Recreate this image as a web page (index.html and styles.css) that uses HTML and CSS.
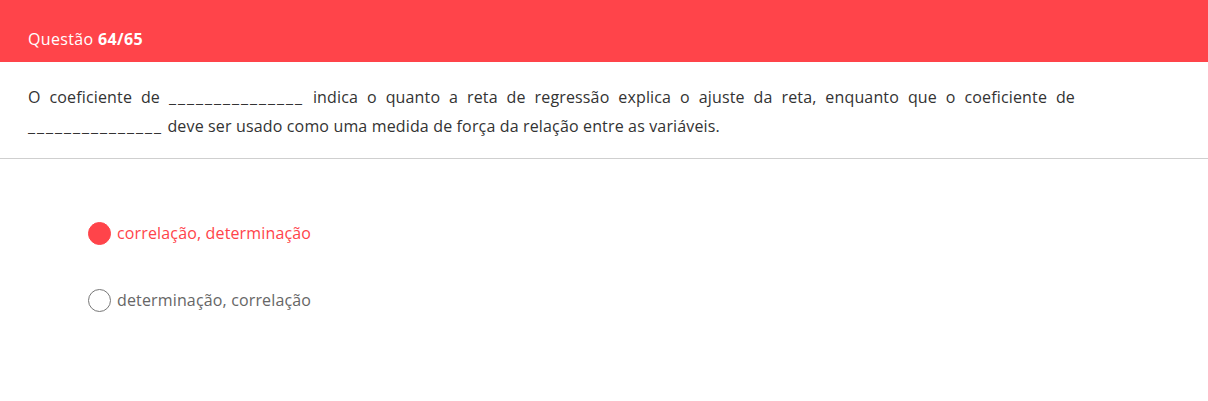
FILE: index.html
```html
<!DOCTYPE html>
<html lang="pt">
<head>
<meta charset="utf-8">
<link rel="stylesheet" href="styles.css">
</head>
<body>
<header class="bar">
  <span class="bar-title">Questão <b>64/65</b></span>
</header>
<section class="question">
  <p class="question-text">O coeficiente de <span class="blank">_______________</span> indica o quanto a reta de regressão explica o ajuste da reta, enquanto que o coeficiente de <span class="blank">_______________</span> deve ser usado como uma medida de força da relação entre as variáveis.</p>
</section>
<ul class="options">
  <li class="option selected"><span class="radio"></span><span class="label">correlação, determinação</span></li>
  <li class="option"><span class="radio"></span><span class="label">determinação, correlação</span></li>
</ul>
</body>
</html>
```
FILE: styles.css
```css
html, body {
  margin: 0;
  padding: 0;
  background: #fff;
  font-family: "Open Sans", "Noto Sans", sans-serif;
}
.bar {
  height: 62px;
  background: #ff444a;
  display: flex;
  align-items: center;
  padding: 15px 28px 0;
  box-sizing: border-box;
}
.bar-title {
  color: #fff;
  font-size: 16px;
  letter-spacing: 0.35px;
}
.bar-title b {
  font-weight: 700;
}
.question {
  padding: 21px 133px 17px 28px;
  border-bottom: 1px solid #cfcfcf;
}
.question-text {
  margin: 0;
  font-size: 16px;
  line-height: 29px;
  color: #333;
  text-align: justify;
  letter-spacing: 0.15px;
}
.blank {
  letter-spacing: 2px;
}
.options {
  list-style: none;
  margin: 0;
  padding: 62px 0 0 88px;
  display: flex;
  flex-direction: column;
  gap: 43px;
}
.option {
  display: flex;
  align-items: center;
  gap: 6px;
  height: 24px;
  font-size: 16px;
  letter-spacing: 0.15px;
  color: #666;
}
.radio {
  width: 21px;
  height: 21px;
  border: 1px solid #777;
  border-radius: 50%;
  flex: none;
}
.option.selected {
  color: #ff444a;
}
.option.selected .radio {
  background: #ff444a;
  border-color: #ff444a;
}
```
